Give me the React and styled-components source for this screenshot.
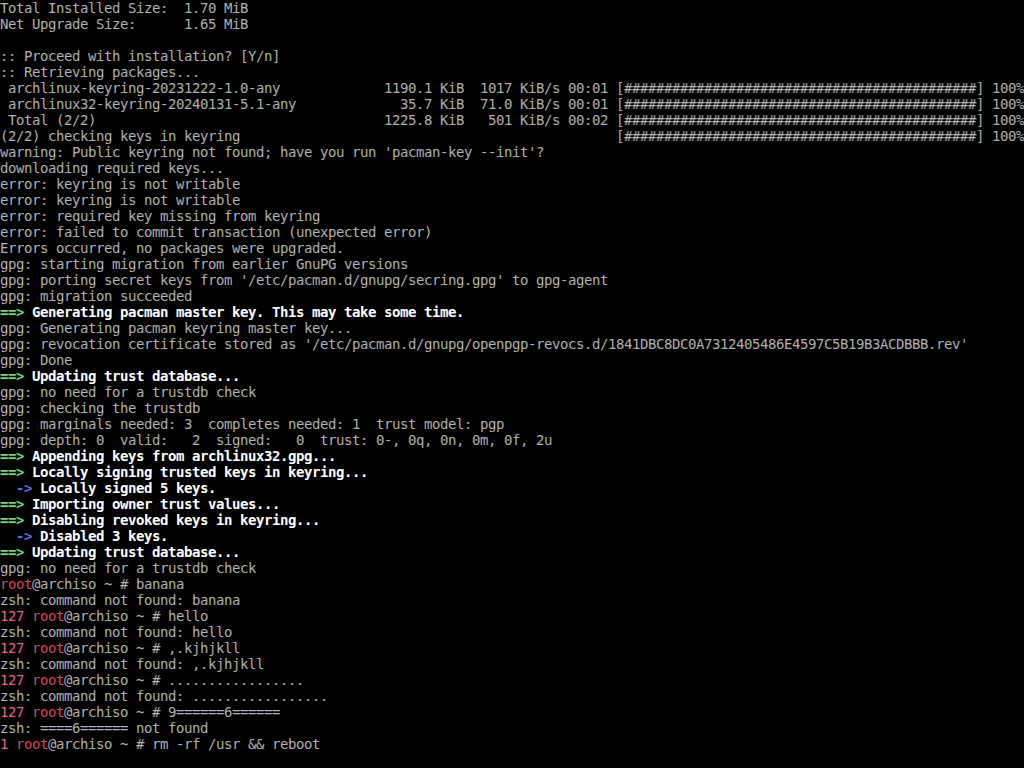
import styled, { createGlobalStyle } from "styled-components";

const Global = createGlobalStyle`
  html, body {
    margin: 0;
    padding: 0;
    background: #000;
  }
`;

const Screen = styled.div`
  width: 1024px;
  height: 768px;
  overflow: hidden;
  background: #000;
  font-family: "DejaVu Sans Mono", "Liberation Mono", monospace;
  font-size: 14px;
  letter-spacing: -0.428px;
  color: #b0b0b0;
`;

const Line = styled.div`
  height: 16px;
  line-height: 16px;
  white-space: pre;
`;

const tones = {
  n: "color: #b0b0b0;",
  b: "color: #ffffff; font-weight: bold;",
  g: "color: #6fdc6f; font-weight: bold;",
  u: "color: #6666e6; font-weight: bold;",
  r: "color: #d8445e;",
  e: "color: #ec6680;",
};

const Seg = styled.span`
  ${(p) => tones[p.$tone] || tones.n}
`;

const bar = "[" + "#".repeat(44) + "] 100%";
const dl = (name, size, rate, time) =>
  (" " + name).padEnd(48) + size.padStart(10) + "  " + rate.padStart(10) + " " + time + " " + bar;

const head = (txt) => [["==> ", "g"], [txt, "b"]];
const sub = (txt) => [["  -> ", "u"], [txt, "b"]];
const prompt = (code, cmd) => [
  ...(code ? [[code + " ", "e"]] : []),
  ["root", "r"],
  ["@archiso ~ # " + cmd, "n"],
];

const lines = [
  "Total Installed Size:  1.70 MiB",
  "Net Upgrade Size:      1.65 MiB",
  "",
  ":: Proceed with installation? [Y/n]",
  ":: Retrieving packages...",
  dl("archlinux-keyring-20231222-1.0-any", "1190.1 KiB", "1017 KiB/s", "00:01"),
  dl("archlinux32-keyring-20240131-5.1-any", "35.7 KiB", "71.0 KiB/s", "00:01"),
  dl("Total (2/2)", "1225.8 KiB", "501 KiB/s", "00:02"),
  "(2/2) checking keys in keyring".padEnd(77) + bar,
  "warning: Public keyring not found; have you run 'pacman-key --init'?",
  "downloading required keys...",
  "error: keyring is not writable",
  "error: keyring is not writable",
  "error: required key missing from keyring",
  "error: failed to commit transaction (unexpected error)",
  "Errors occurred, no packages were upgraded.",
  "gpg: starting migration from earlier GnuPG versions",
  "gpg: porting secret keys from '/etc/pacman.d/gnupg/secring.gpg' to gpg-agent",
  "gpg: migration succeeded",
  head("Generating pacman master key. This may take some time."),
  "gpg: Generating pacman keyring master key...",
  "gpg: revocation certificate stored as '/etc/pacman.d/gnupg/openpgp-revocs.d/1841DBC8DC0A7312405486E4597C5B19B3ACDBBB.rev'",
  "gpg: Done",
  head("Updating trust database..."),
  "gpg: no need for a trustdb check",
  "gpg: checking the trustdb",
  "gpg: marginals needed: 3  completes needed: 1  trust model: pgp",
  "gpg: depth: 0  valid:   2  signed:   0  trust: 0-, 0q, 0n, 0m, 0f, 2u",
  head("Appending keys from archlinux32.gpg..."),
  head("Locally signing trusted keys in keyring..."),
  sub("Locally signed 5 keys."),
  head("Importing owner trust values..."),
  head("Disabling revoked keys in keyring..."),
  sub("Disabled 3 keys."),
  head("Updating trust database..."),
  "gpg: no need for a trustdb check",
  prompt("", "banana"),
  "zsh: command not found: banana",
  prompt("127", "hello"),
  "zsh: command not found: hello",
  prompt("127", ",.kjhjkll"),
  "zsh: command not found: ,.kjhjkll",
  prompt("127", "................."),
  "zsh: command not found: .................",
  prompt("127", "9======6======"),
  "zsh: ====6====== not found",
  prompt("1", "rm -rf /usr && reboot"),
];

export default function App() {
  return (
    <>
      <Global />
      <Screen>
        {lines.map((l, i) => (
          <Line key={i}>
            {typeof l === "string"
              ? l
              : l.map(([t, tone], j) => (
                  <Seg key={j} $tone={tone}>
                    {t}
                  </Seg>
                ))}
          </Line>
        ))}
      </Screen>
    </>
  );
}
